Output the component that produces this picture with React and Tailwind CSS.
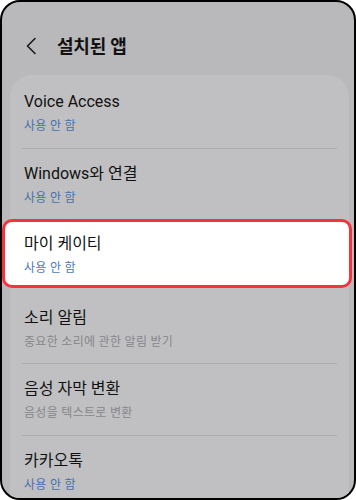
import React from "react";

const rows = [
  { title: "Voice Access", sub: "사용 안 함", blue: true },
  { title: "Windows와 연결", sub: "사용 안 함", blue: true },
  { title: "마이 케이티", sub: "사용 안 함", blue: true, hl: true },
  { title: "소리 알림", sub: "중요한 소리에 관한 알림 받기", blue: false },
  { title: "음성 자막 변환", sub: "음성을 텍스트로 변환", blue: false },
  { title: "카카오톡", sub: "사용 안 함", blue: true },
];

const font = { fontFamily: "Roboto, 'Noto Sans CJK KR', sans-serif" };

export default function App() {
  return (
    <div className="w-[356px] h-[500px] bg-white" style={font}>
      <div className="w-full h-full border-2 border-black rounded-[20px] bg-[#b9b9bb] overflow-hidden flex flex-col">
        <div className="h-[73px] shrink-0 flex items-center pl-[22px] pt-[15px]">
          <svg width="14" height="18" viewBox="0 0 14 18" className="mr-[19px]">
            <path d="M11 1.5 L3.5 9 L11 16.5" fill="none" stroke="#1a1a1a" strokeWidth="1.6" strokeLinecap="round" strokeLinejoin="round" />
          </svg>
          <span className="text-[18px] font-bold text-[#111] tracking-[-0.2px]">설치된 앱</span>
        </div>
        <div className="ml-[8px] mr-[5px] bg-[#c0c0c2] rounded-t-[22px] flex-1 px-[12px] pt-[2px]">
          {rows.map((r, i) => {
            const next = rows[i + 1];
            const showDivider = i < rows.length - 1 && !r.hl && !(next && next.hl);
            return (
              <div key={i}>
                {r.hl ? (
                  <div className="-ml-[20px] -mr-[15px] -mt-px h-[69px] border-[3px] border-[#f5333f] rounded-[10px] bg-white pl-[19px] pt-[3px] flex flex-col justify-center">
                    <div className="text-[16px] leading-[20px] text-[#111]">{r.title}</div>
                    <div className="text-[12px] leading-[16px] mt-[6px] text-[#4a78bd] tracking-[0.3px]">{r.sub}</div>
                  </div>
                ) : (
                  <div className={(i === 3 ? "h-[75px] pt-[7px] " : "h-[71px] ") + "pl-[2px] flex flex-col justify-center"}>
                    <div className="text-[16px] leading-[20px] text-[#111]">{r.title}</div>
                    <div className={"text-[12px] leading-[16px] mt-[6px] tracking-[0.3px] " + (r.blue ? "text-[#4571b0]" : "text-[#87878a]")}>{r.sub}</div>
                  </div>
                )}
                {showDivider && <div className="h-px bg-[#acacae]" />}
              </div>
            );
          })}
        </div>
      </div>
    </div>
  );
}
